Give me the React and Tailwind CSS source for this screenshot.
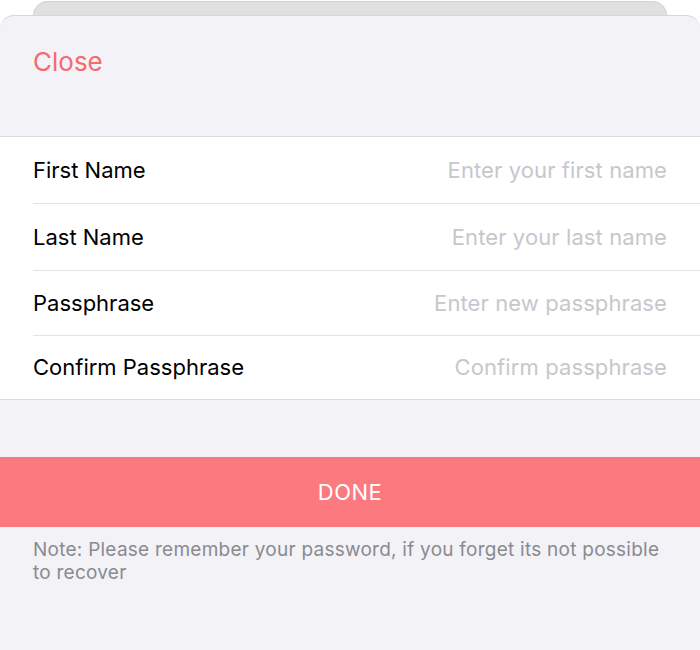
import React from 'react';

const FIELDS = [
  { label: 'First Name', placeholder: 'Enter your first name', h: 'h-[67px]' },
  { label: 'Last Name', placeholder: 'Enter your last name', h: 'h-[67px]' },
  { label: 'Passphrase', placeholder: 'Enter new passphrase', h: 'h-[65px]' },
  { label: 'Confirm Passphrase', placeholder: 'Confirm passphrase', h: 'h-[63px]' },
];

export default function App() {
  return (
    <div className="w-[700px] h-[650px] bg-white overflow-hidden font-['Inter',sans-serif]">
      {/* card peeking behind the sheet */}
      <div className="mx-[33px] mt-px h-[30px] rounded-t-[14px] bg-[#e0e0e0] border border-[#d2d2d2]"></div>
      <div className="-mt-[16px] relative h-[650px] rounded-t-[14px] bg-[#f2f2f7] border-t border-[#d6d6da]">
        <div className="h-[120px] px-[33px] pt-[33px]">
          <span className="text-[26px] text-[#f9686e] leading-none">Close</span>
        </div>
        <div className="bg-white border-y border-[#dcdce0]">
          {FIELDS.map((f, i) => (
            <div key={f.label} className={`pl-[33px] ${f.h}`}>
              <div
                className={`h-full flex items-center justify-between pr-[33px] ${
                  i < FIELDS.length - 1 ? 'border-b border-[#e3e3e6]' : ''
                }`}
              >
                <span className="text-[22px] text-black">{f.label}</span>
                <span className="text-[22px] tracking-[0.1px] text-[#c7c7cc]">{f.placeholder}</span>
              </div>
            </div>
          ))}
        </div>
        <div className="h-[57px]"></div>
        <button className="w-full h-[70px] bg-[#fb7a80] border-t border-[#d98a86] text-white text-[22px] tracking-[0.5px] flex items-center justify-center">
          DONE
        </button>
        <p className="px-[33px] pr-[36px] pt-[11px] text-[19px] tracking-[0.25px] leading-[23px] text-[#8a8a8f]">
          Note: Please remember your password, if you forget its not possible to recover
        </p>
      </div>
    </div>
  );
}
